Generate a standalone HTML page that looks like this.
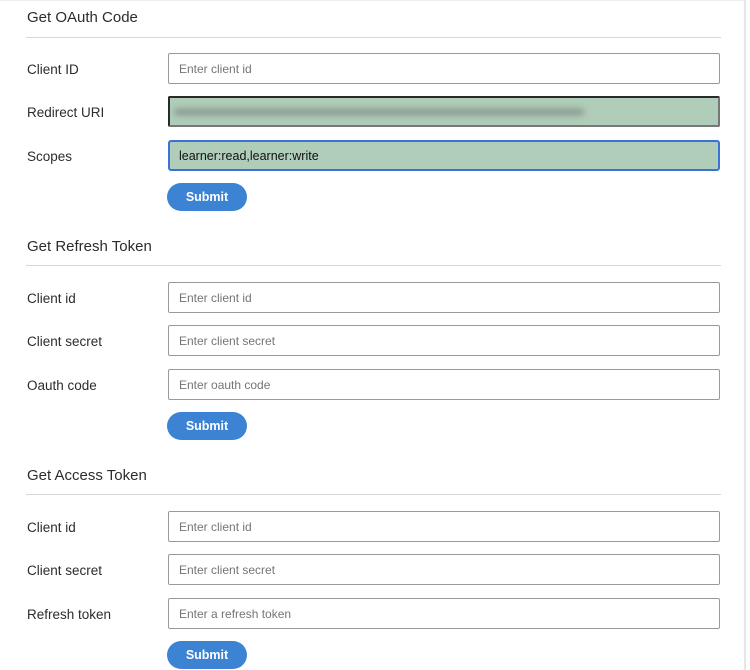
<!DOCTYPE html>
<html><head><style>
*{box-sizing:border-box;margin:0;padding:0}
body{width:750px;height:670px;background:#fff;font-family:"Liberation Sans",sans-serif;position:relative;overflow:hidden}
.frame{position:absolute;left:0;top:0;width:746px;height:670px;border-right:2px solid #e6e6e6;border-top:1px solid #eee}
.h{position:absolute;left:27px;font-size:15px;color:#2c2c2c}
.hr{position:absolute;left:26px;width:695px;height:1px;background:#d8d8d8}
.l{position:absolute;left:27px;font-size:13.5px;color:#2c2c2c}
.in{position:absolute;left:168px;width:552px;height:31px;border:1px solid #9a9a9a;border-radius:2px;font-size:12px;color:#757575;padding:8px 10px 0 10px}
.btn{position:absolute;left:167px;width:80px;height:28px;border-radius:14px;background:#3c83d4;color:#fff;font-size:12.5px;font-weight:bold;text-align:center;line-height:28px}
</style></head><body>
<div class="frame"></div>

<div class="h" style="top:9px">Get OAuth Code</div>
<div class="hr" style="top:37px"></div>
<div class="l" style="top:62px">Client ID</div>
<div class="in" style="top:53px">Enter client id</div>
<div class="l" style="top:105px">Redirect URI</div>
<div class="in" style="top:96px;background:#b0cdb9;border:2px solid #2a2a2a;border-bottom-color:#777;border-right-color:#777;padding:0">
<div style="position:absolute;left:4px;top:10px;width:410px;height:8px;background:#8fa196;filter:blur(3px);border-radius:3px"></div></div>
<div class="l" style="top:149px">Scopes</div>
<div class="in" style="top:140px;background:#b0cdb9;border:2px solid #3a72d6;border-radius:3px;color:#111;font-size:12.5px;padding-top:7px;padding-left:9px">learner:read,learner:write</div>
<div class="btn" style="top:183px">Submit</div>

<div class="h" style="top:238px">Get Refresh Token</div>
<div class="hr" style="top:265px"></div>
<div class="l" style="top:291px">Client id</div>
<div class="in" style="top:282px">Enter client id</div>
<div class="l" style="top:334px">Client secret</div>
<div class="in" style="top:325px">Enter client secret</div>
<div class="l" style="top:378px">Oauth code</div>
<div class="in" style="top:369px">Enter oauth code</div>
<div class="btn" style="top:412px">Submit</div>

<div class="h" style="top:467px">Get Access Token</div>
<div class="hr" style="top:494px"></div>
<div class="l" style="top:520px">Client id</div>
<div class="in" style="top:511px">Enter client id</div>
<div class="l" style="top:563px">Client secret</div>
<div class="in" style="top:554px">Enter client secret</div>
<div class="l" style="top:607px">Refresh token</div>
<div class="in" style="top:598px">Enter a refresh token</div>
<div class="btn" style="top:641px">Submit</div>
</body></html>
